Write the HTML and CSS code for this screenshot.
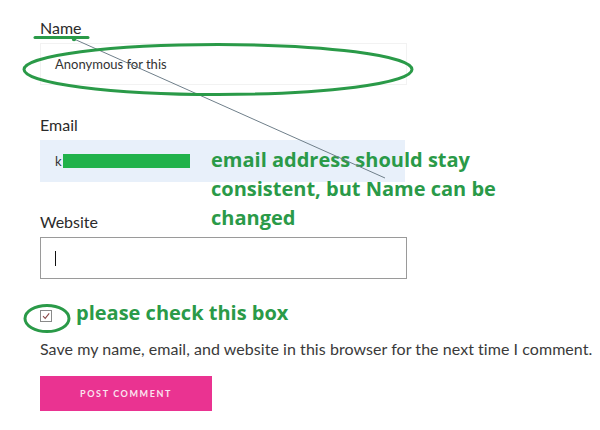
FILE: index.html
```html
<!DOCTYPE html>
<html lang="en">
  <head>
    <meta charset="UTF-8" />
    <title>Comment form</title>
    <link rel="stylesheet" href="styles.css">
  </head>
  <body>
    <div class="page">
      <form class="comment-form">
        <div class="field">
          <label class="label">Name</label>
          <div class="input input-name">Anonymous for this</div>
        </div>
        <div class="field">
          <label class="label">Email</label>
          <div class="input input-email">k<span class="redact"></span></div>
        </div>
        <div class="field">
          <label class="label">Website</label>
          <div class="input input-site"><span class="caret"></span></div>
        </div>

        <div class="consent">
          <span class="checkbox">
            <svg width="12" height="12" viewBox="0 0 12 12">
              <rect x="0.5" y="0.5" width="11" height="11" fill="#fff" stroke="#8a8a8a" />
              <path d="M3 6.2 L5.2 8.4 L9.2 3.4" fill="none" stroke="#8b4a4a" stroke-width="1.1" />
            </svg>
          </span>
          <span class="note note-check">please check this box</span>
        </div>
        <p class="consent-text">Save my name, email, and website in this browser for the next time I comment.</p>

        <button type="button" class="submit">POST COMMENT</button>
      </form>

      <!-- hand-drawn annotations on top of the form -->
      <p class="note note-email">email address should stay<br>consistent, but Name can be<br>changed</p>
      <svg class="marks" width="600" height="430" viewBox="0 0 600 430">
        <line x1="35" y1="37.5" x2="88" y2="37.5" stroke="#2a9a48" stroke-width="3" stroke-linecap="round" />
        <line x1="74" y1="39" x2="385" y2="178" stroke="#6f7f8a" stroke-width="1" />
        <circle cx="74" cy="39" r="2.2" fill="#2a9a48" />
        <ellipse cx="218" cy="69.5" rx="194" ry="25" fill="none" stroke="#2a9a48" stroke-width="3" />
        <ellipse cx="47" cy="318.5" rx="22" ry="13" fill="none" stroke="#2a9a48" stroke-width="3" />
      </svg>
    </div>
  </body>
</html>
```

FILE: styles.css
```css
* {
  margin: 0;
  padding: 0;
  box-sizing: border-box;
}
body {
  background: #fff;
  font-family: Lato, "Open Sans", sans-serif;
  color: #333;
}
.page {
  position: relative;
  width: 600px;
  height: 430px;
  overflow: hidden;
}
.comment-form {
  padding: 18px 0 0 40px;
}
.field {
  margin-bottom: 30px;
}
.label {
  display: block;
  font-size: 16px;
  line-height: 20px;
  margin-bottom: 5px;
  color: #2b2b2b;
}
.input {
  width: 367px;
  height: 42px;
  padding-left: 15px;
  display: flex;
  align-items: center;
  font-size: 13px;
  color: #333;
}
.input-name {
  border: 1px solid #f2f2f2;
  padding-left: 14px;
}
.input-email {
  background: #e8f0fa;
  width: 365px;
}
.redact {
  display: inline-block;
  width: 127px;
  height: 14px;
  background: #21b24b;
  margin-left: 1px;
}
.input-site {
  border: 1px solid #9a9a9a;
  padding-left: 14px;
}
.caret {
  display: inline-block;
  width: 1px;
  height: 15px;
  background: #111;
}
.consent {
  display: flex;
  align-items: center;
  margin-top: 4px;
  height: 14px;
}
.checkbox {
  display: flex;
  width: 12px;
  height: 12px;
  margin-right: 24px;
}
.note {
  font-family: "Open Sans", "Liberation Sans", sans-serif;
  font-weight: 700;
  color: #2a9a48;
  font-size: 20px;
}
.note-check {
  line-height: 20px;
  margin-top: -7px;
}
.note-email {
  position: absolute;
  left: 211px;
  top: 145px;
  line-height: 29px;
}
.consent-text {
  font-size: 16px;
  letter-spacing: 0.05px;
  line-height: 20px;
  margin-top: 16px;
  color: #3a3a3a;
}
.submit {
  display: block;
  margin-top: 17px;
  width: 172px;
  height: 35px;
  border: none;
  background: #ea3391;
  color: #fbe3ef;
  font-family: Lato, sans-serif;
  font-weight: 700;
  font-size: 9px;
  letter-spacing: 1.6px;
}
.marks {
  position: absolute;
  left: 0;
  top: 0;
  pointer-events: none;
}
```
